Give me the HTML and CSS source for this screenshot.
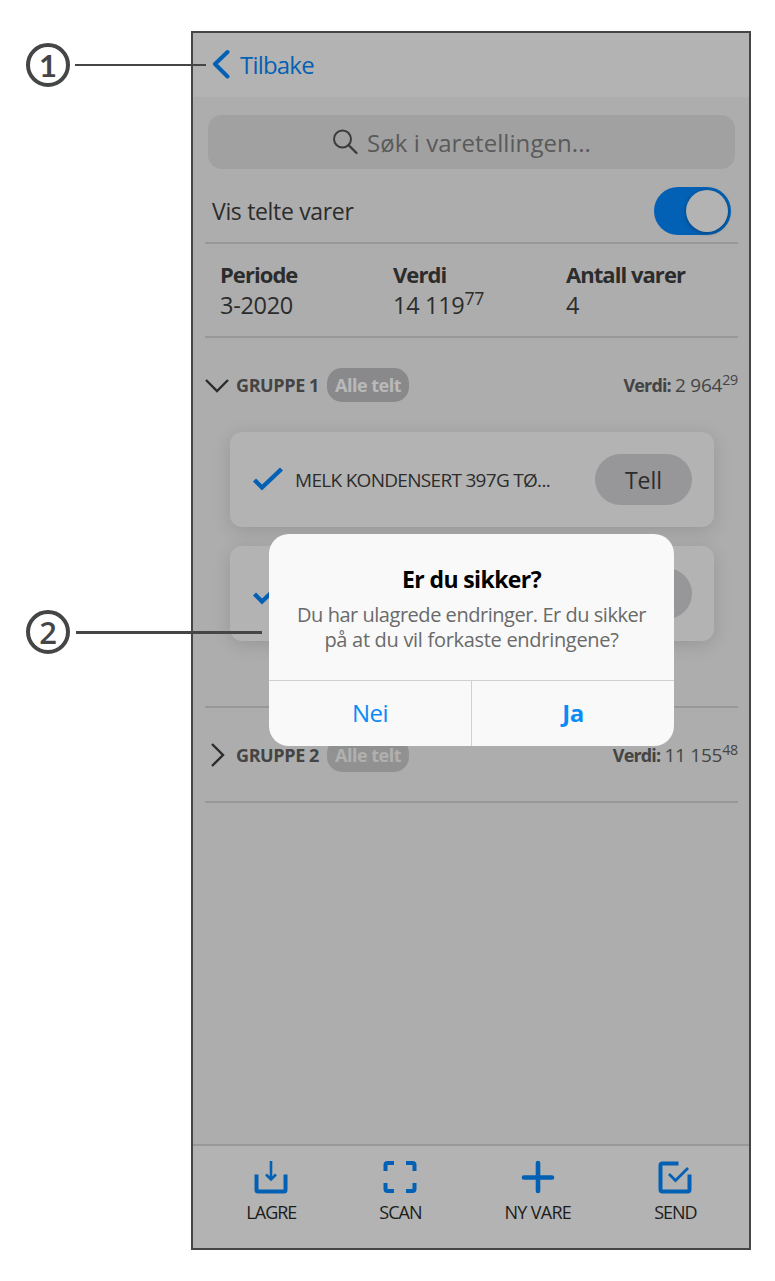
FILE: index.html
```html
<!DOCTYPE html>
<html lang="no">
<head>
<meta charset="utf-8">
<title>Varetelling</title>
<link rel="stylesheet" href="styles.css">
</head>
<body>
<div class="page">
  <main class="phone">
    <header class="topbar">
      <svg class="back-icon" width="18" height="32" viewBox="0 0 18 32"><path d="M15.500 3 3 15l12.500 12.500" fill="none" stroke="#0361b5" stroke-width="4" stroke-linecap="round" stroke-linejoin="round"/></svg>
      <span class="back">Tilbake</span>
    </header>
    <div class="search">
      <svg width="28" height="28" viewBox="0 0 28 28" fill="none" stroke="#3c3c3c" stroke-width="2"><circle cx="10.500" cy="11" r="8.500"/><path d="m16.500 17 8 8" stroke-linecap="round" stroke-width="2.400"/></svg>
      <span class="placeholder">Søk i varetellingen...</span>
    </div>
    <section class="content">
      <div class="toggle-row">
        <span class="toggle-label">Vis telte varer</span>
        <span class="switch"><span class="knob"></span></span>
      </div>
      <div class="summary">
        <div><b>Periode</b><span>3-2020</span></div>
        <div><b>Verdi</b><span>14 119<sup>77</sup></span></div>
        <div><b>Antall varer</b><span>4</span></div>
      </div>
      <div class="group">
        <svg class="chev" width="26" height="26" viewBox="0 0 26 26"><path d="M2 8l11 11L24 8" fill="none" stroke="#2c2c2c" stroke-width="2.400"/></svg>
        <b class="group-name">GRUPPE 1</b>
        <span class="pill">Alle telt</span>
        <span class="value"><b>Verdi:</b> <span class="amount">2 964<sup>29</sup></span></span>
      </div>
      <div class="cards">
        <div class="card">
          <svg width="32" height="26" viewBox="0 0 32 26"><path d="M2.500 13 10 20.500 29.500 2" fill="none" stroke="#0361b5" stroke-width="4.400"/></svg>
          <span class="item">MELK KONDENSERT 397G TØ...</span>
          <span class="tell">Tell</span>
        </div>
        <div class="card">
          <svg width="32" height="26" viewBox="0 0 32 26"><path d="M2.500 13 10 20.500 29.500 2" fill="none" stroke="#0361b5" stroke-width="4.400"/></svg>
          <span class="item"></span>
          <span class="tell"></span>
        </div>
      </div>
      <div class="group group-last">
        <svg class="chev" width="26" height="26" viewBox="0 0 26 26"><path d="M8 2l11 11L8 24" fill="none" stroke="#2c2c2c" stroke-width="2.400"/></svg>
        <b class="group-name">GRUPPE 2</b>
        <span class="pill pill-dim">Alle telt</span>
        <span class="value"><b>Verdi:</b> <span class="amount">11 155<sup>48</sup></span></span>
      </div>
    </section>
    <nav class="tabs">
      <div class="tab"><svg width="34" height="34" viewBox="0 0 34 34" fill="none" stroke="#0361b5"><path d="M2.500 14.500V30a1.500 1.500 0 0 0 1.500 1.500h26A1.500 1.500 0 0 0 31.500 30V14.500" stroke-width="4"/><path d="M17 1v18M12 14.500l5 5 5-5" stroke-width="2.600"/></svg><span>LAGRE</span></div>
      <div class="tab"><svg width="34" height="34" viewBox="0 0 34 34" fill="none" stroke="#0361b5" stroke-width="4"><path d="M2.500 11V5q0-2 2-2H11M23 3h6.500q2 0 2 2v6M31.500 23v6q0 2-2 2H23M11 31H4.500q-2 0-2-2v-6"/></svg><span>SCAN</span></div>
      <div class="tab tab-wide"><svg width="34" height="34" viewBox="0 0 34 34"><path d="M17 3v28M3 17.500h28" stroke="#0361b5" stroke-width="4.600" stroke-linecap="round"/></svg><span>NY VARE</span></div>
      <div class="tab"><svg width="34" height="34" viewBox="0 0 34 34" fill="none" stroke="#0361b5"><path d="M20.500 3.500H4.500q-2 0-2 2V29.500q0 2 2 2h25q2 0 2-2V14.500" stroke-width="4"/><path d="M11 14l6.500 6.500L30 8" stroke-width="2.800"/></svg><span>SEND</span></div>
    </nav>
  </main>

  <div class="dialog">
    <h1>Er du sikker?</h1>
    <p><span>Du har ulagrede endringer. Er du sikker</span><span class="loose">på at du vil forkaste endringene?</span></p>
    <div class="actions"><span>Nei</span><b class="ja">Ja</b></div>
  </div>

  <div class="callout c1"><span class="num">1</span><i></i></div>
  <div class="callout c2"><span class="num">2</span><i></i></div>
</div>
</body>
</html>
```
FILE: styles.css
```css
* { box-sizing: border-box; }
body { margin: 0; background: #fff; font-family: "Open Sans", "Noto Sans", sans-serif; color: #2c2c2c; }
svg { display: block; flex: none; }
.page { position: relative; height: 1281px; padding: 31px 24px 31px 191px; white-space: nowrap; overflow: hidden; }
.phone { height: 1219px; border: 2px solid #444546; background: #adadad; display: flex; flex-direction: column; }
.topbar { height: 64px; background: #b3b3b3; display: flex; align-items: center; padding-left: 19px; color: #0361b5; font-size: 24px; letter-spacing: -.8px; }
.back { margin: -2px 0 0 10px; }
.search { height: 54px; margin: 18px 14px 0 15px; border-radius: 14px; background: #a1a1a1; display: flex; align-items: center; padding-left: 124px; color: #5a5a5a; font-size: 24px; letter-spacing: .07px; }
.placeholder { margin-left: 7px; }
.content { margin: 0 11px 0 12px; flex: 1; }
.toggle-row { height: 75px; border-bottom: 2px solid #989898; display: flex; align-items: center; justify-content: space-between; padding: 10px 7px 0 7px; font-size: 23px; letter-spacing: -.33px; }
.switch { width: 77px; height: 48px; border-radius: 24px; background: #0361b5; padding: 3px; display: flex; justify-content: flex-end; }
.knob { width: 42px; height: 42px; border-radius: 50%; background: #b3b3b3; box-shadow: 0 1px 4px rgba(0,0,0,.35); }
.summary { height: 94px; border-bottom: 2px solid #989898; display: grid; grid-template-columns: 173px 173px 1fr; padding: 15px 0 0 15px; font-size: 23.500px; line-height: 31px; letter-spacing: -.3px; }
.summary div { display: flex; flex-direction: column; }
.summary b { font-size: 22px; letter-spacing: -.95px; }
sup { font-size: 75%; line-height: 0; vertical-align: 7px; }
.summary sup { vertical-align: 9px; }
.group { height: 94px; display: flex; align-items: center; font-size: 18px; letter-spacing: -.5px; color: #444; }
.group-name { margin-left: 6px; width: 83px; font-size: 18px; letter-spacing: -.4px; }
.chev { margin-left: -1px; }
.pill { width: 82px; height: 34px; margin-left: 8px; border-radius: 15px; background: #89898b; color: #b9b9b9; font-weight: 700; display: flex; align-items: center; justify-content: center; }
.pill-dim { background: #919191; color: #b0b0b0; }
.value { margin-left: auto; }
.value b { letter-spacing: -.85px; }
.amount { font-size: 19px; letter-spacing: -.25px; }
.cards { display: grid; gap: 19px; margin: 0 24px 65px 25px; }
.card { height: 95px; border-radius: 12px; background: #b3b3b3; box-shadow: 0 4px 18px rgba(0,0,0,.13); display: flex; align-items: center; padding: 0 22px; }
.item { margin-left: 11px; font-size: 19px; letter-spacing: -.7px; }
.tell { margin-left: auto; width: 97px; height: 51px; border-radius: 25.500px; background: #979799; display: flex; align-items: center; justify-content: center; font-size: 23px; }
.group-last { height: 97px; border: solid #989898; border-width: 2px 0; }
.tabs { height: 104px; border-top: 2px solid #989898; background: #b3b3b3; display: flex; justify-content: center; gap: 83px; padding: 14px 0 0 1px; font-size: 18px; letter-spacing: -1px; color: #1c1c1c; }
.tab { display: flex; flex-direction: column; align-items: center; }
.tab span { line-height: 36px; }
.tab-wide { letter-spacing: -.7px; }
.dialog { position: absolute; left: 269px; top: 534px; width: 405px; height: 212px; border-radius: 20px; background: #f9f9f9; display: flex; flex-direction: column; text-align: center; overflow: hidden; }
.dialog h1 { margin: 28px 0 0; font-size: 23px; line-height: 34px; letter-spacing: -.6px; color: #000; }
.dialog p { margin: 6px 0 0; font-size: 20px; line-height: 25px; letter-spacing: -.47px; color: #6a6a6a; flex: 1; }
.dialog p span { display: block; }
.dialog p .loose { letter-spacing: -.3px; }
.actions { height: 66px; border-top: 1px solid #d0d0d0; display: grid; grid-template-columns: 202px 1fr; line-height: 64px; font-size: 24px; letter-spacing: -.5px; color: #0a8bf5; }
.actions .ja { border-left: 1px solid #d0d0d0; }
.callout { position: absolute; left: 26px; display: flex; align-items: center; }
.c1 { top: 43px; }
.c2 { top: 610px; }
.num { width: 44px; height: 44px; border: 4px solid #444546; border-radius: 50%; color: #444546; display: flex; align-items: center; justify-content: center; font: 700 31px/36px Lato, sans-serif; }
.c2 .num { font: 600 31px/36px "Open Sans", sans-serif; }
.callout i { height: 2px; width: 131px; margin-left: 5px; background: #444546; }
.c2 i { height: 3px; width: 186px; margin-left: 6px; }
```
